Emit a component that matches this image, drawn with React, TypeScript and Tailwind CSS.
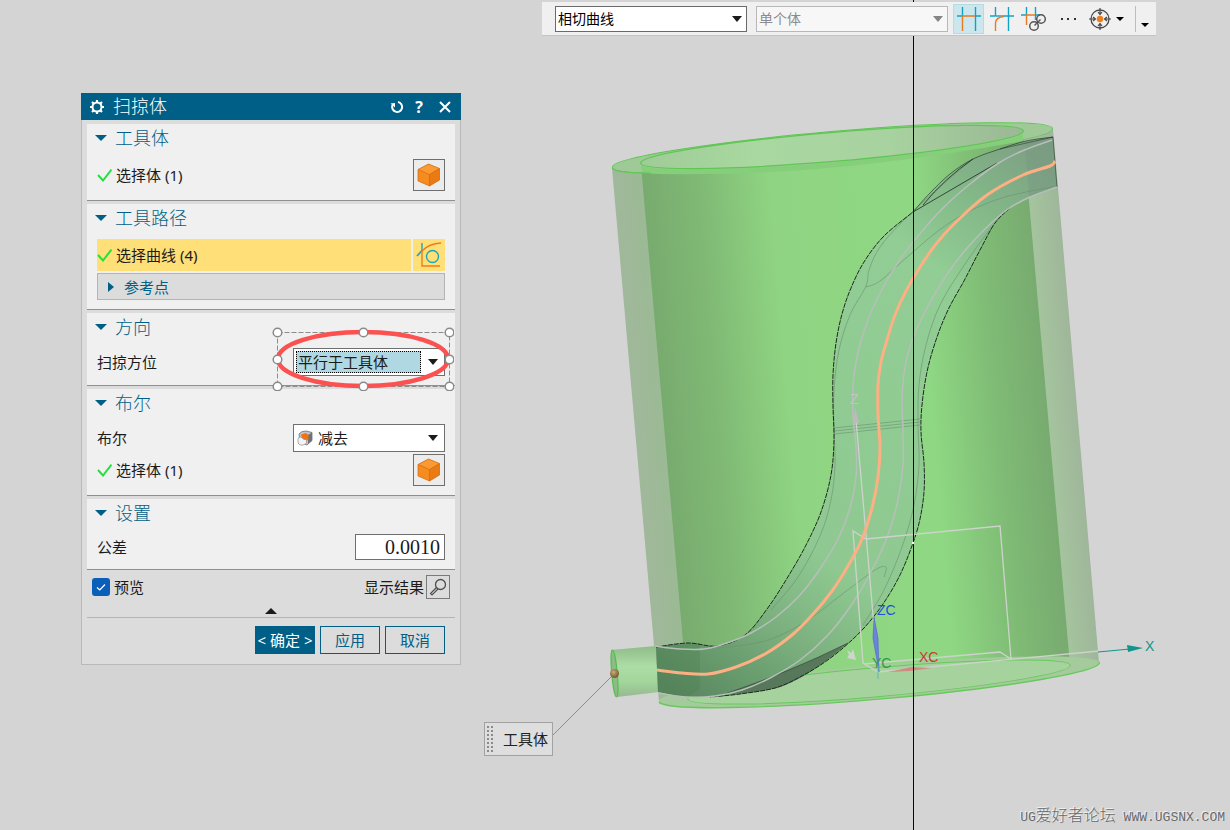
import type { ReactNode } from 'react';

type Point = [number, number];

/** Catmull-Rom spline through the given points, as an svg path. */
function smooth(points: Point[]): string {
  let d = `M${points[0][0]} ${points[0][1]}`;
  for (let i = 0; i < points.length - 1; i++) {
    const p0 = points[i - 1] ?? points[i];
    const p1 = points[i];
    const p2 = points[i + 1];
    const p3 = points[i + 2] ?? p2;
    const c1 = [p1[0] + (p2[0] - p0[0]) / 6, p1[1] + (p2[1] - p0[1]) / 6];
    const c2 = [p2[0] - (p3[0] - p1[0]) / 6, p2[1] - (p3[1] - p1[1]) / 6];
    d += ` C${c1[0].toFixed(1)} ${c1[1].toFixed(1)} ${c2[0].toFixed(1)} ${c2[1].toFixed(1)} ${p2[0]} ${p2[1]}`;
  }
  return d;
}

const TUBE_LEFT: Point[] = [
  [656, 647], [688, 643], [717, 646], [745, 635], [767, 609], [786, 580], [805, 547], [821, 512],
  [831, 475], [834, 440], [833, 407], [833, 375], [836, 343], [842, 314], [851, 288], [864, 262],
  [884, 236], [913, 212],
];
const TUBE_TOP: Point[] = [[913, 212], [930, 193], [950, 174], [973, 159], [1000, 149], [1026, 141], [1053, 137]];
const TUBE_RIGHT: Point[] = [
  [1057, 187], [1033, 195], [1010, 208], [995, 223], [980, 250], [965, 279], [948, 310], [936, 340],
  [927, 372], [922, 405], [921, 432], [924, 463], [924, 492], [920, 519], [913, 543], [900, 575],
  [883, 604], [864, 628], [843, 648], [822, 664], [800, 677], [775, 688], [740, 694], [710, 697],
  [680, 696], [658, 692],
];
const CENTER: Point[] = [
  [657, 670], [682, 673], [708, 674], [736, 667], [765, 654], [792, 635], [814, 613], [832, 591],
  [848, 566], [862, 539], [872, 508], [878, 477], [880, 447], [878, 415], [878, 385], [881, 362],
  [887, 340], [895, 315], [906, 291], [920, 267], [936, 244], [956, 222], [987, 195], [1023, 175],
  [1050, 166], [1055, 161],
];
const GUIDE_LEFT: Point[] = [
  [655, 646], [680, 649], [704, 649], [727, 643], [751, 633], [776, 617], [800, 595], [822, 566],
  [839, 537], [850, 508], [856, 477], [856, 447], [853, 415], [853, 386], [857, 357], [866, 325],
  [879, 295], [897, 264], [918, 236], [943, 208], [970, 184], [997, 164], [1022, 151], [1052, 140],
];
const GUIDE_RIGHT: Point[] = [
  [658, 693], [685, 697], [715, 696], [742, 690], [770, 678], [800, 660], [828, 635], [852, 604],
  [872, 570], [888, 535], [898, 500], [903, 465], [903, 430], [902, 400], [904, 374], [909, 350],
  [919, 324], [933, 297], [950, 270], [968, 247], [988, 226], [1008, 209], [1030, 197], [1057, 187],
];
const INNER_LEFT: Point[] = [
  [771, 610], [798, 577], [820, 536], [831, 500], [835, 465], [834, 430], [834, 390], [839, 350],
  [850, 315], [866, 286], [869, 270], [880, 247], [903, 221], [933, 193], [970, 161],
];
const INNER_RIGHT: Point[] = [
  [863, 625], [884, 590], [902, 547], [914, 505], [919, 465], [918, 425], [919, 385], [926, 345], [940, 305], [965, 264], [993, 225],
];
const TUBE_BODY = `${smooth(TUBE_LEFT)} ${smooth(TUBE_TOP).replace('M', 'L')} ${smooth(TUBE_RIGHT).replace('M', 'L')} Z`;

function Viewport() {
  return (
    <svg
      className="absolute inset-0 h-full w-full"
      viewBox="0 0 1230 830"
      preserveAspectRatio="xMinYMin meet"
      fill="none"
      aria-hidden="true"
    >
      <defs>
        <linearGradient id="inner" gradientUnits="userSpaceOnUse" x1="641" y1="165" x2="1023" y2="133">
          <stop offset="0" stopColor="#78ab6f" />
          <stop offset="0.14" stopColor="#7fb874" />
          <stop offset="0.33" stopColor="#8fd482" />
          <stop offset="0.7" stopColor="#8fd883" />
          <stop offset="0.86" stopColor="#80bd76" />
          <stop offset="1" stopColor="#78ab70" />
        </linearGradient>
        <linearGradient id="outer" gradientUnits="userSpaceOnUse" x1="612" y1="168" x2="1053" y2="130">
          <stop offset="0" stopColor="#a0b89b" />
          <stop offset="0.07" stopColor="#9bba94" />
          <stop offset="0.93" stopColor="#a5c59e" />
          <stop offset="1" stopColor="#9fb69a" />
        </linearGradient>
        <linearGradient id="cap" gradientUnits="userSpaceOnUse" x1="641" y1="0" x2="1023" y2="0">
          <stop offset="0" stopColor="#9fcb97" />
          <stop offset="0.3" stopColor="#a9d8a0" />
          <stop offset="0.65" stopColor="#a8d2a0" />
          <stop offset="1" stopColor="#9ab894" />
        </linearGradient>
        <linearGradient id="tube" gradientUnits="userSpaceOnUse" x1="657" y1="680" x2="1055" y2="150">
          <stop offset="0" stopColor="#5a8560" />
          <stop offset="0.08" stopColor="#679a6c" />
          <stop offset="0.18" stopColor="#7db280" />
          <stop offset="0.3" stopColor="#8fc991" />
          <stop offset="0.75" stopColor="#91cd94" />
          <stop offset="0.87" stopColor="#83b788" />
          <stop offset="1" stopColor="#7d9d83" />
        </linearGradient>
        <linearGradient id="stub" x1="0" y1="0" x2="0" y2="1">
          <stop offset="0" stopColor="#8fbb88" />
          <stop offset="0.4" stopColor="#addda6" />
          <stop offset="0.7" stopColor="#a3d69b" />
          <stop offset="1" stopColor="#96b891" />
        </linearGradient>
        <radialGradient id="ball" cx="0.4" cy="0.35" r="0.7">
          <stop offset="0" stopColor="#c9ac78" />
          <stop offset="1" stopColor="#6d5228" />
        </radialGradient>
      </defs>

      {/* Cylinder walls */}
      <path d="M612 168L659 702L879 690L1099 663L1053 130L832 140Z" fill="url(#outer)" />
      <path d="M641 165L688 699L879 690L1070 665L1023 133L832 140Z" fill="url(#inner)" />

      {/* Bottom ring */}
      <g stroke="#66c95b">
        <ellipse cx="879" cy="682" rx="221" ry="17" transform="rotate(-5 879 682)" fill="#a5cb9d" stroke="none" />
        <path d="M1099 662A221 17 -5 0 1 659 702" strokeWidth="1.4" />
        <ellipse cx="879" cy="682" rx="192" ry="14.5" transform="rotate(-5 879 682)" fill="#a6d39d" />
      </g>

      {/* Top ring: the inner rim has a visible thickness towards the viewer */}
      <g stroke="#5fc654">
        <ellipse cx="832.5" cy="148" rx="221" ry="16.5" transform="rotate(-5 832.5 148)" fill="#9fca98" />
        <path d="M641 165A192 14.500 -4.800 0 0 1023 131V141Q840 174 700 174Q650 175 642 172Z" fill="#86cf7a" stroke="none" />
        <ellipse cx="832" cy="147" rx="192" ry="14.5" transform="rotate(-4.8 832 147)" fill="url(#cap)" strokeWidth="1.3" />
        <path d="M612 168Q615 173 650 173" />
      </g>

      {/* Tool stub */}
      <path d="M611 650L656 646L659 692L617 697Z" fill="url(#stub)" />
      <ellipse cx="614.5" cy="673.5" rx="2.8" ry="23.5" transform="rotate(-5 614.5 673.5)" stroke="#53bd4c" fill="#8cbb86" />

      {/* Swept tube */}
      <path d={TUBE_BODY} fill="url(#tube)" />
      <path d="M1025 142L1053 137L1057 187L1029 197Z" fill="#789a82" fillOpacity="0.5" />
      <path d="M656 647L686 644L700 643V689L688 697L658 692Z" fill="#4d8150" fillOpacity="0.35" />
      <path d="M725 694Q790 672 848 643Q805 680 777 688Q750 694 725 694Z" fill="#58785b" />
      <g stroke="#6d8f72" strokeOpacity="0.6">
        <path d={smooth(INNER_LEFT)} />
        <path d={smooth(INNER_RIGHT)} />
        <path d={smooth([[719, 648], [765, 641], [805, 622], [845, 592], [875, 570], [886, 567], [884, 577]])} />
        <path d={smooth([[866, 287], [880, 281], [906, 258], [938, 231], [968, 212], [1005, 197], [1056, 186]])} />
        <path d="M834 428L920 419M834 431L920 422M834 434L920 425" />
      </g>
      <g stroke="#1d2a1f">
        <path d={smooth(TUBE_LEFT)} strokeDasharray="5 1" />
        <path d={smooth(TUBE_TOP)} strokeOpacity="0.6" />
        <path d="M913 212L997 163M923 205Q945 178 973 159" strokeOpacity="0.8" />
        <path d={smooth(TUBE_RIGHT.slice(2, 24))} strokeDasharray="5 1" />
        <path d="M725 694Q790 672 848 643M1000 149L1053 137L1057 187" strokeOpacity="0.5" />
      </g>
      <g stroke="#b7bfba" strokeWidth="1.5">
        <path d={smooth(GUIDE_LEFT)} />
        <path d={smooth(GUIDE_RIGHT)} />
      </g>

      {/* Datum plane and axes */}
      <g stroke="#cdd3cb" strokeWidth="1.3">
        <path d="M878 672L863 663L853 531L866 539L1000 526L1011 659L1000 652L864 664" />
        <path d="M856 420L878 672L1099 651" />
      </g>
      <path d="M855 407L859 423L853 423Z" fill="#bdb9bd" />
      <path d="M847 650L851 653L853 649L856 660L847 658L849 655Z" fill="#cdd6cc" />
      <path d="M874 617L878 638L879 672L873 638Z" fill="#6d82dc" stroke="#4a63cf" strokeWidth="0.6" />
      <path d="M888 672L912 667L932 668L910 671Z" fill="#d08a83" />
      <path d="M878 666V679" stroke="#5cb8a8" />
      <path d="M1098 652L1130 649" stroke="#11958c" />
      <path d="M1127 645L1143 648L1128 652Z" fill="#11958c" />

      <path d={smooth(CENTER)} stroke="#fcb083" strokeWidth="3" />

      <g className="font-['Liberation_Sans']" fontSize="14">
        <text x="850" y="404" fill="#c3c3c6">Z</text>
        <text x="877" y="615" fill="#234fe0">ZC</text>
        <text x="919" y="662" fill="#c83a32">XC</text>
        <text x="872" y="668" fill="#329948">YC</text>
        <text x="1145" y="651" fill="#11958c">X</text>
      </g>

      <path d="M913.5 0V830" stroke="#080808" />
      <circle cx="913" cy="543" r="1.2" fill="#fff" />
      <path d="M553 735L613 675" stroke="#a08c68" />
      <circle cx="614.5" cy="673.5" r="4.5" fill="url(#ball)" />
    </svg>
  );
}

function Caret({ className = '' }: { className?: string }) {
  return (
    <svg className={className} width="10" height="6" viewBox="0 0 10 6" fill="currentColor" aria-hidden="true">
      <path d="M0 0H10L5 6Z" />
    </svg>
  );
}

function Check() {
  return (
    <svg width="15" height="14" viewBox="0 0 15 14" fill="none" stroke="#25df3c" strokeWidth="2" aria-hidden="true">
      <path d="M1 7L6 12.500L14.500 1.500" />
    </svg>
  );
}

function CubeIcon() {
  return (
    <svg width="24" height="24" viewBox="0 0 24 24" aria-hidden="true">
      <path d="M11.500 1L22.500 5.500V17L12.500 23L1 18V6.500Z" fill="#f68b20" />
      <path d="M11.500 1L22.500 5.500L12.500 11.500L1 6.500Z" fill="#fb9a30" />
      <path d="M12.500 11.500L22.500 5.500V17L12.500 23Z" fill="#ea7a12" />
      <path
        d="M11.500 1L22.500 5.500V17L12.500 23L1 18V6.500ZM1 6.500L12.500 11.500V23M12.500 11.500L22.500 5.500"
        fill="none"
        stroke="#cf6a12"
        strokeWidth="0.7"
      />
    </svg>
  );
}

function CurveIcon() {
  return (
    <svg width="28" height="26" viewBox="0 0 28 26" fill="none" strokeWidth="1.400" aria-hidden="true">
      <path d="M7 1V9" stroke="#2a9fc0" />
      <path d="M2 14L7 8.500" stroke="#2a9fc0" strokeWidth="1.800" />
      <path d="M7 9V24H25" stroke="#ef7d16" />
      <path d="M7 9Q14 1.500 26 1" stroke="#ef7d16" />
      <circle cx="17.500" cy="14.500" r="6" stroke="#1aa7b5" />
    </svg>
  );
}

function SubtractIcon() {
  return (
    <svg width="16" height="16" viewBox="0 0 16 16" aria-hidden="true">
      <path d="M2 4Q4 1 9 1L15 2.500V10.500L10 15L3 12Z" fill="#c4c6c8" stroke="#6b6e70" strokeWidth="0.8" />
      <path d="M15 2.500L11 5V14L15 10.500Z" fill="#6f7275" />
      <path d="M4 4.500L9 3L11.500 5V10L6 11Z" fill="#ee7417" />
      <path d="M1 9Q1 7 4 7L7 9.500L9.500 9.500V13Q7 15.500 4 15.200Q1 14.500 1 12Z" fill="#f4f4f4" stroke="#8b8d8f" strokeWidth="0.7" />
    </svg>
  );
}

function Section({ title, children }: { title: string; children: ReactNode }) {
  return (
    <section className="border-b border-[#8f8f8f] bg-[#f0f0f0] pb-[9px]">
      <h2>
        <button type="button" className="flex h-7 items-center gap-2 pl-2 text-lg font-light leading-7 text-[#005f87]">
          <svg width="12" height="6" viewBox="0 0 12 6" fill="currentColor" aria-hidden="true">
            <path d="M0 0H12L6 6Z" />
          </svg>
          {title}
        </button>
      </h2>
      <div className="mt-[7px] px-[10px]">{children}</div>
    </section>
  );
}

function BodyRow() {
  return (
    <div className="flex h-8 items-center justify-between">
      <span className="flex items-center gap-1">
        <Check />
        选择体 (1)
      </span>
      <button
        type="button"
        aria-label="选择体"
        className="flex size-8 items-center justify-center border border-[#6f6f6f] bg-[#ececec]"
      >
        <CubeIcon />
      </button>
    </div>
  );
}

function SelectionAnnotation() {
  const handles: Point[] = [
    [5, 5], [91, 5], [177, 5], [5, 32], [177, 32], [5, 59], [91, 59], [177, 59],
  ];
  return (
    <svg
      className="pointer-events-none absolute -left-[22px] -top-[22px]"
      width="182"
      height="64"
      viewBox="0 0 182 64"
      fill="none"
      aria-hidden="true"
    >
      <rect x="5.500" y="5.500" width="172" height="54" stroke="#8c8c8c" strokeDasharray="5 2" />
      <ellipse cx="91" cy="32" rx="85" ry="27" stroke="#fb5150" strokeWidth="4.500" />
      {handles.map(([x, y]) => (
        <circle key={`${x}-${y}`} cx={x + 0.5} cy={y + 0.5} r="4.300" fill="#fff" stroke="#8a8a8a" strokeWidth="1.500" />
      ))}
    </svg>
  );
}

function SweepDialog() {
  return (
    <form
      className="w-[380px] border border-t-0 border-[#b9b9b9] bg-[#dcdcdc] text-[15px] leading-5 text-[#1b1b1b]"
      onSubmit={(event) => event.preventDefault()}
    >
      <header className="-mx-px flex h-[27px] items-center bg-[#005f87] px-2 text-white">
        <svg width="16" height="16" viewBox="0 0 16 16" fill="none" stroke="currentColor" aria-hidden="true">
          <circle cx="8" cy="8" r="4.500" strokeWidth="2" />
          <path
            d="M8 1V3.500M8 12.500V15M1 8H3.500M12.500 8H15M3 3L4.800 4.800M11.200 11.200L13 13M13 3L11.200 4.800M4.800 11.200L3 13"
            strokeWidth="2.200"
          />
        </svg>
        <h1 className="ml-2 flex-1 text-lg font-light leading-[27px]">扫掠体</h1>
        <div className="flex items-center gap-[6px]">
          <button type="button" aria-label="重置" className="flex w-4 justify-center">
            <svg width="14" height="14" viewBox="0 0 14 14" fill="none" aria-hidden="true">
              <path d="M2.500 5A5 5 0 1 0 8 2" stroke="currentColor" strokeWidth="2" />
              <path d="M0.500 3.500L5 3V7.500Z" fill="currentColor" />
            </svg>
          </button>
          <button type="button" className="w-4 font-['Open_Sans'] text-base font-bold leading-5">?</button>
          <button type="button" aria-label="关闭" className="ml-1 flex w-4 justify-center">
            <svg width="12" height="12" viewBox="0 0 12 12" stroke="currentColor" strokeWidth="2" aria-hidden="true">
              <path d="M1 1L11 11M11 1L1 11" />
            </svg>
          </button>
        </div>
      </header>

      <div className="flex flex-col gap-[3px] px-[5px] pt-1">
        <Section title="工具体">
          <BodyRow />
        </Section>

        <Section title="工具路径">
          <div className="flex h-8 gap-[2px]">
            <span className="flex flex-1 items-center gap-1 bg-[#ffe078]">
              <Check />
              选择曲线 (4)
            </span>
            <button type="button" aria-label="选择曲线" className="flex w-8 items-center justify-center bg-[#ffe078]">
              <CurveIcon />
            </button>
          </div>
          <button
            type="button"
            className="mt-[2px] flex h-[27px] w-full items-center gap-[10px] border border-[#b4b4b4] bg-[#dcdcdc] pl-[10px] text-[#005f87]"
          >
            <svg width="6" height="10" viewBox="0 0 6 10" fill="currentColor" aria-hidden="true">
              <path d="M0 0L6 5L0 10Z" />
            </svg>
            参考点
          </button>
        </Section>

        <Section title="方向">
          <div className="flex h-7 items-center justify-between">
            <label htmlFor="orientation">扫掠方位</label>
            <div className="relative flex h-7 w-[152px] items-center border border-[#6f6f6f] bg-white p-[2px]">
              <select
                id="orientation"
                className="h-full w-[125px] appearance-none border border-dotted border-black bg-[#b0d8e2] pl-px outline-none"
              >
                <option>平行于工具体</option>
              </select>
              <Caret className="pointer-events-none absolute right-[6px]" />
              <SelectionAnnotation />
            </div>
          </div>
        </Section>

        <Section title="布尔">
          <div className="mb-[2px] flex h-7 items-center justify-between">
            <label htmlFor="boolean">布尔</label>
            <div className="relative flex h-7 w-[152px] items-center">
              <select id="boolean" className="h-full w-full appearance-none border border-[#6f6f6f] bg-white pl-6">
                <option>减去</option>
              </select>
              <span className="pointer-events-none absolute left-1">
                <SubtractIcon />
              </span>
              <Caret className="pointer-events-none absolute right-[7px]" />
            </div>
          </div>
          <BodyRow />
        </Section>

        <Section title="设置">
          <div className="flex h-[26px] items-center justify-between">
            <label htmlFor="tolerance">公差</label>
            <input
              id="tolerance"
              defaultValue="0.0010"
              className="h-full w-[90px] border border-[#6f6f6f] bg-white px-1 text-right font-['Liberation_Serif'] text-xl leading-6"
            />
          </div>
        </Section>
      </div>

      <div className="flex h-[34px] items-center justify-between px-[10px] pl-[10px]">
        <label className="flex items-center gap-1">
          <span className="relative flex size-[18px]">
            <input type="checkbox" defaultChecked className="size-[18px] appearance-none rounded-[3px] bg-[#0a5fb8]" />
            <svg
              className="pointer-events-none absolute inset-0"
              width="18"
              height="18"
              viewBox="0 0 18 18"
              fill="none"
              stroke="#fff"
              aria-hidden="true"
            >
              <path d="M5 9.500L7.800 12L13 6.500" strokeWidth="1.200" />
            </svg>
          </span>
          预览
        </label>
        <div className="flex items-center gap-[2px]">
          <label htmlFor="show-result">显示结果</label>
          <button
            id="show-result"
            type="button"
            className="flex size-6 items-center justify-center border border-[#7a7a7a]"
          >
            <svg width="18" height="18" viewBox="0 0 18 18" fill="none" stroke="#505050" aria-hidden="true">
              <circle cx="11.500" cy="6.500" r="5" strokeWidth="1.300" />
              <path d="M7.500 9.500L1.500 15.500L3 17L9 11" strokeWidth="1.200" />
            </svg>
          </button>
        </div>
      </div>

      <div className="mx-[5px] flex h-[14px] items-center justify-center border-b border-[#b4b4b4]">
        <button type="button" aria-label="折叠" className="text-[#1b1b1b]">
          <svg width="12" height="6" viewBox="0 0 12 6" fill="currentColor" aria-hidden="true">
            <path d="M0 6H12L6 0Z" />
          </svg>
        </button>
      </div>

      <footer className="flex justify-end gap-[5px] px-[15px] pb-[10px] pt-2">
        <button type="submit" className="h-7 w-[60px] whitespace-nowrap bg-[#005f87] text-white">
          &lt; 确定 &gt;
        </button>
        <button type="button" className="h-7 w-[60px] border border-[#005f87] text-[#005f87]">应用</button>
        <button type="button" className="h-7 w-[60px] border border-[#005f87] text-[#005f87]">取消</button>
      </footer>
    </form>
  );
}

function Toolbar() {
  return (
    <div className="flex h-[34px] items-center border-b border-[#c4c4c4] bg-[#f0f0f0] pl-[13px] text-sm">
      <div className="relative flex h-[26px] w-48 items-center">
        <select
          aria-label="曲线规则"
          className="h-full w-full appearance-none border border-[#6a6a6a] bg-white pl-[2px] text-black"
        >
          <option>相切曲线</option>
        </select>
        <Caret className="pointer-events-none absolute right-[5px] text-[#1b1b1b]" />
      </div>
      <div className="relative ml-[9px] flex h-[26px] w-48 items-center">
        <select
          aria-label="体规则"
          disabled
          className="h-full w-full appearance-none border border-[#b8b8b8] bg-[#f7f7f7] pl-[2px] text-[#8c8c8c] opacity-100"
        >
          <option>单个体</option>
        </select>
        <Caret className="pointer-events-none absolute right-[5px] text-[#858585]" />
      </div>

      <button
        type="button"
        aria-label="在相交处停止"
        className="ml-[5px] flex h-[30px] w-[31px] items-center justify-center border border-[#b5dce5] bg-[#cbe6ed]"
      >
        <svg width="24" height="24" viewBox="0 0 24 24" fill="none" strokeWidth="1.400" aria-hidden="true">
          <path d="M5.500 0V9M18.500 0V24M0 9H5M19 9H24" stroke="#10a3c6" />
          <path d="M5.500 24V9H18" stroke="#e87a22" />
        </svg>
      </button>
      <button type="button" aria-label="跟随圆角" className="ml-[6px]">
        <svg width="24" height="24" viewBox="0 0 24 24" fill="none" strokeWidth="1.400" aria-hidden="true">
          <path d="M5.500 0V9M18.500 0V24M0 9H5.500M14 9H24" stroke="#10a3c6" />
          <path d="M5.500 9H14" stroke="#10a3c6" />
          <path d="M5.500 24V16Q6 10 14 9.500" stroke="#e87a22" />
        </svg>
      </button>
      <button type="button" aria-label="特征成链" className="ml-[7px]">
        <svg width="26" height="26" viewBox="0 0 26 26" fill="none" strokeWidth="1.400" aria-hidden="true">
          <path d="M5.500 1V9M14.500 1V14M0 9H5M14 9H19" stroke="#10a3c6" />
          <path d="M5.500 19V9H14" stroke="#e87a22" />
          <circle cx="20" cy="13" r="4.300" stroke="#555" strokeWidth="1.500" />
          <circle cx="13" cy="20" r="4.300" stroke="#555" strokeWidth="1.500" />
          <path d="M13.500 19.500L19.500 13.500" stroke="#555" strokeWidth="1.500" />
        </svg>
      </button>
      <button type="button" aria-label="更多" className="ml-[14px]">
        <svg width="16" height="4" viewBox="0 0 16 4" fill="#333" aria-hidden="true">
          <rect x="0" y="1" width="2" height="2" />
          <rect x="6" y="1" width="2" height="2" />
          <rect x="13" y="1" width="2" height="2" />
        </svg>
      </button>
      <button type="button" aria-label="捕捉点" className="ml-3 flex items-center gap-[5px]">
        <svg width="22" height="24" viewBox="0 0 22 24" fill="none" stroke="#484848" aria-hidden="true">
          <circle cx="11" cy="12" r="9" strokeWidth="1.300" />
          <path
            d="M11 1V7M11 17V23M0 12H6M16 12H22M9 5L11 7.500L13 5M9 19L11 16.500L13 19M4 10L6.500 12L4 14M18 10L15.500 12L18 14"
            strokeWidth="1.200"
          />
          <circle cx="11" cy="12" r="3.200" fill="#f07d1c" stroke="none" />
        </svg>
        <svg width="8" height="4" viewBox="0 0 8 4" aria-hidden="true">
          <path d="M0 0H8L4 4Z" />
        </svg>
      </button>
      <span className="ml-[11px] h-[26px] w-px bg-[#bdbdbd]" />
      <button type="button" aria-label="工具条选项" className="ml-[5px] mr-[7px] h-[26px] pt-3">
        <svg width="8" height="4" viewBox="0 0 8 4" aria-hidden="true">
          <path d="M0 0H8L4 4Z" />
        </svg>
      </button>
    </div>
  );
}

export default function App() {
  return (
    <main className="relative min-h-screen overflow-hidden bg-[#d4d4d4] font-['Noto_Sans','Noto_Sans_CJK_SC',sans-serif]">
      <Viewport />

      <div className="relative flex justify-end pr-[74px] pt-[2px]">
        <Toolbar />
      </div>
      <div className="relative ml-[81px] mt-[57px] w-fit">
        <SweepDialog />
      </div>

      {/* Callout pinned to the tool body */}
      <div className="absolute left-[484px] top-[722px] flex h-[34px] w-[69px] items-center border border-[#a2a2a2] bg-[#dedede] pl-[2px] text-[15px] leading-5 text-[#222]">
        <svg width="8" height="28" viewBox="0 0 8 28" stroke="#8a8a8a" strokeWidth="2" strokeDasharray="2 2" aria-hidden="true">
          <path d="M1 1V27M5 1V27" />
        </svg>
        <span className="ml-2 whitespace-nowrap">工具体</span>
      </div>

      <p className="absolute bottom-0 right-[5px] font-['Liberation_Mono','Noto_Sans_CJK_SC',monospace] text-[13px] leading-6 text-[#6a6a6a] [text-shadow:-1px_-1px_0_#f2f2f2]">
        UG<span className="text-base font-light leading-6">爱好者论坛</span> WWW.UGSNX.COM
      </p>
    </main>
  );
}
